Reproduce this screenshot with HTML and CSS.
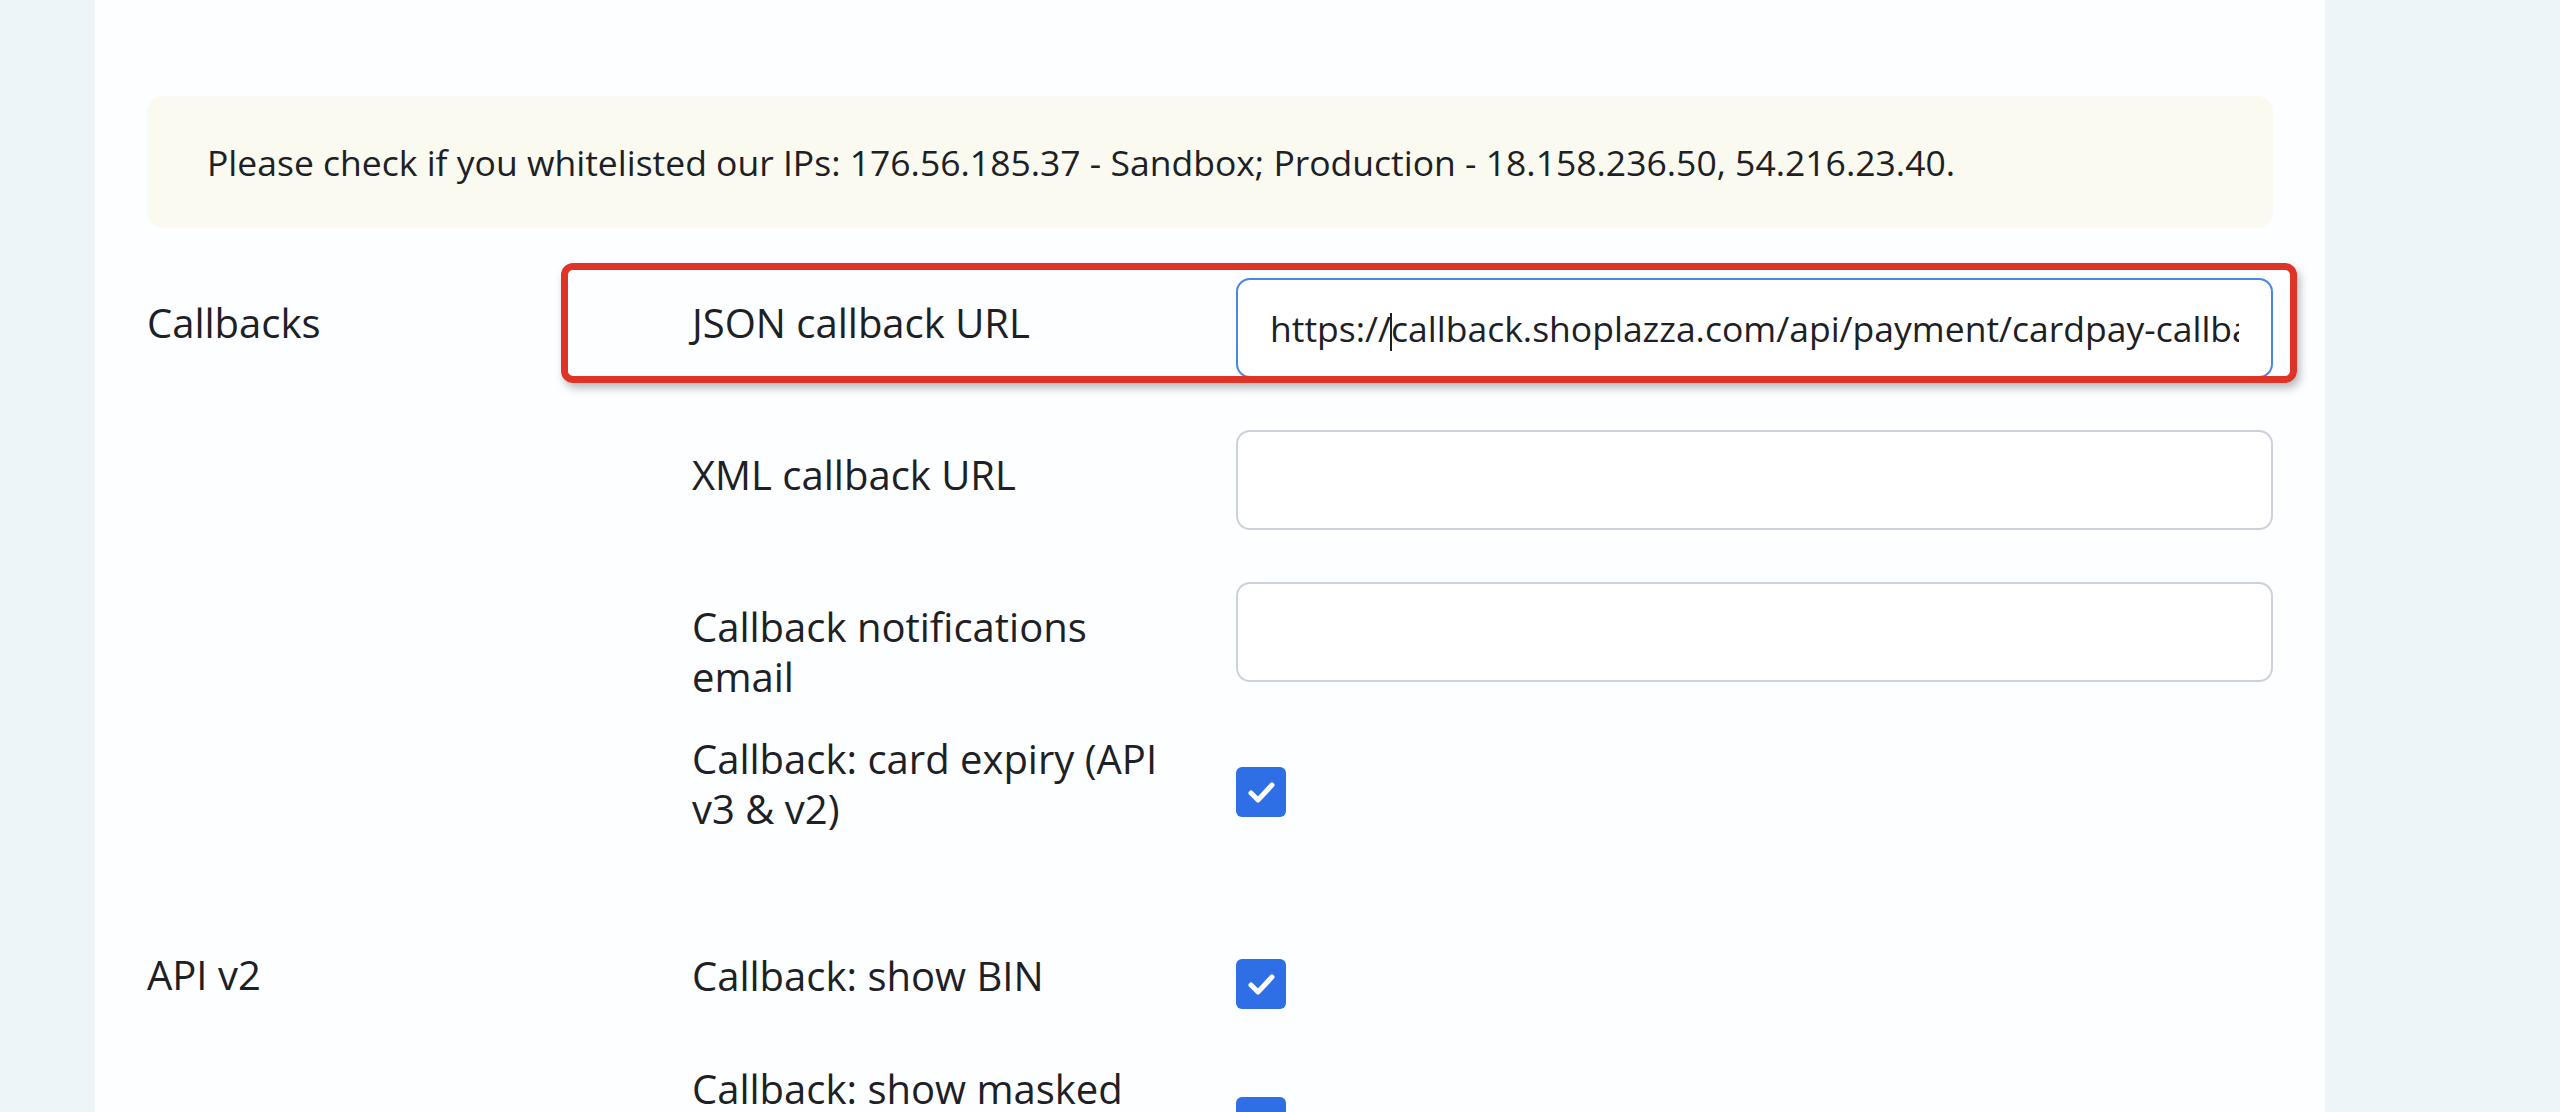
FILE: index.html
```html
<!DOCTYPE html>
<html lang="en">
<head>
    <meta charset="UTF-8">
    <meta name="viewport" content="width=device-width, initial-scale=1.0">
    <title>Callback settings</title>
    <link rel="stylesheet" href="styles.css">
</head>
<body>
    <div class="page">
        <div class="notice">
            Please check if you whitelisted our IPs: 176.56.185.37 - Sandbox; Production - 18.158.236.50, 54.216.23.40.
        </div>

        <div class="section">
            <div class="section-title">Callbacks</div>
            <div class="fields">
                <div class="field field-text highlighted">
                    <label class="field-label">JSON callback URL</label>
                    <div class="input focused">
                        <span class="value">https://<span class="caret"></span>callback.shoplazza.com/api/payment/cardpay-callback</span>
                    </div>
                    <div class="mark"></div>
                </div>
                <div class="field field-text">
                    <label class="field-label">XML callback URL</label>
                    <input class="input" type="text">
                </div>
                <div class="field field-text">
                    <label class="field-label">Callback notifications email</label>
                    <input class="input" type="text">
                </div>
                <div class="field field-check">
                    <label class="field-label">Callback: card expiry (API v3 &amp; v2)</label>
                    <div class="check-wrap">
                        <span class="checkbox">
                            <svg viewBox="0 0 50 50" width="50" height="50"><path d="M15 26 L22 33 L36 18" fill="none" stroke="#fff" stroke-width="5" stroke-linecap="round" stroke-linejoin="round"/></svg>
                        </span>
                    </div>
                </div>
            </div>
        </div>

        <div class="section">
            <div class="section-title title-check">API v2</div>
            <div class="fields">
                <div class="field field-check">
                    <label class="field-label">Callback: show BIN</label>
                    <div class="check-wrap">
                        <span class="checkbox">
                            <svg viewBox="0 0 50 50" width="50" height="50"><path d="M15 26 L22 33 L36 18" fill="none" stroke="#fff" stroke-width="5" stroke-linecap="round" stroke-linejoin="round"/></svg>
                        </span>
                    </div>
                </div>
                <div class="field field-check">
                    <label class="field-label">Callback: show masked PAN</label>
                    <div class="check-wrap">
                        <span class="checkbox">
                            <svg viewBox="0 0 50 50" width="50" height="50"><path d="M15 26 L22 33 L36 18" fill="none" stroke="#fff" stroke-width="5" stroke-linecap="round" stroke-linejoin="round"/></svg>
                        </span>
                    </div>
                </div>
            </div>
        </div>
    </div>
</body>
</html>
```

FILE: styles.css
```css
body {
    margin: 0;
    background: #eef5f9;
    font-family: "Open Sans", "Noto Sans", sans-serif;
    color: #1d2125;
}
.page {
    margin-left: 95px;
    width: 2230px;
    min-height: 1112px;
    box-sizing: border-box;
    padding: 96px 52px 0;
    background: #fdfeff;
}
.notice {
    height: 132px;
    display: flex;
    align-items: center;
    padding: 0 60px;
    background: #fafaf1;
    border-radius: 16px;
    font-size: 35.5px;
    margin-bottom: 50px;
}
.section {
    display: flex;
    margin-bottom: 54px;
}
.section-title {
    width: 545px;
    flex: none;
    font-size: 40px;
    line-height: 50px;
    padding-top: 20px;
}
.section-title.title-check {
    padding-top: 7px;
}
.fields {
    flex: 1;
    min-width: 0;
}
.field {
    display: flex;
    margin-bottom: 52px;
    position: relative;
}
.field-check {
    align-items: center;
    margin-bottom: 55px;
}
.field-label {
    width: 544px;
    flex: none;
    box-sizing: border-box;
    padding-right: 60px;
    font-size: 40px;
    line-height: 50px;
}
/* label may spill below the input, the input sets the row height */
.field-text .field-label {
    height: 100px;
    padding-top: 20px;
}
.input {
    flex: 1;
    min-width: 0;
    height: 100px;
    box-sizing: border-box;
    border: 2px solid #cbd2dc;
    border-radius: 14px;
    padding: 0 32px;
    font-family: inherit;
    font-size: 35.5px;
    color: #1d2125;
    background: #fff;
    outline: none;
}
.input.focused {
    border-color: #4a86e8;
    display: flex;
    align-items: center;
}
.input .value {
    flex: 1;
    min-width: 0;
    white-space: nowrap;
    overflow: hidden;
    line-height: 50px;
}
.caret {
    display: inline-block;
    width: 2px;
    height: 38px;
    vertical-align: -9px;
    background: #1d2125;
    margin: 0 -1px;
}
.mark {
    position: absolute;
    top: -15px;
    bottom: -5px;
    left: -131px;
    right: -24px;
    border: 7px solid #de3427;
    border-radius: 12px;
    box-shadow: 3px 5px 8px rgba(60, 60, 60, 0.35);
    pointer-events: none;
}
.check-wrap {
    padding-top: 16px;
}
.checkbox {
    display: block;
    width: 50px;
    height: 50px;
    border-radius: 6px;
    background: #2f6fe6;
}
.checkbox svg {
    display: block;
}
```
